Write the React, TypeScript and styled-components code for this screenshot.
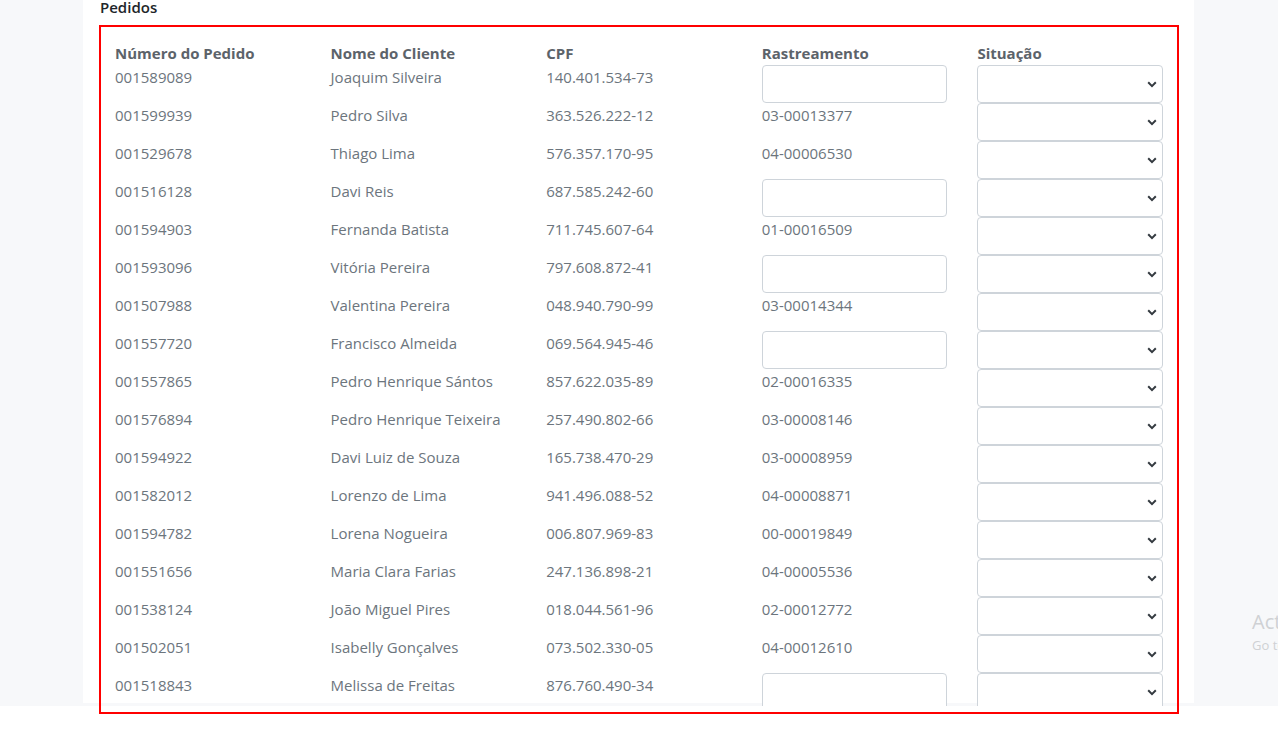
import React from 'react';
import styled, { createGlobalStyle } from 'styled-components';

const GlobalStyle = createGlobalStyle`
  html, body {
    margin: 0;
    padding: 0;
    background: #ffffff;
  }
  * {
    box-sizing: border-box;
  }
`;

const Screen = styled.div`
  position: relative;
  width: 1278px;
  height: 739px;
  overflow: hidden;
  background: #ffffff;
  font-family: 'Open Sans', 'Noto Sans', 'Liberation Sans', sans-serif;
`;

const Viewport = styled.div`
  height: 706px;
  overflow: hidden;
  background: #f7f8fa;
`;

const Card = styled.main`
  width: 1111px;
  height: 100%;
  margin: 0 84px 0 83px;
  padding: 0 15px 0 16px;
  background: #ffffff;
`;

const Title = styled.h5`
  margin: -3px 0 8px 1px;
  height: 20px;
  font-size: 15px;
  line-height: 20px;
  font-weight: 600;
  color: #212529;
`;

const OrdersTable = styled.section`
  padding: 16px 16px 0 16px;
`;

const Row = styled.div<{ $header?: boolean }>`
  display: grid;
  grid-template-columns: repeat(5, 1fr);
  column-gap: 30px;
  height: ${(p) => (p.$header ? '24px' : '38px')};
  align-items: start;
`;

const Cell = styled.div<{ $header?: boolean }>`
  font-size: 15px;
  line-height: 24px;
  font-weight: ${(p) => (p.$header ? 700 : 400)};
  color: ${(p) => (p.$header ? '#5c636a' : '#6c757d')};
  white-space: nowrap;
`;

const TrackingInput = styled.input`
  display: block;
  width: 100%;
  height: 38px;
  padding: 6px 12px;
  border: 1px solid #ced4da;
  border-radius: 4px;
  background: #ffffff;
  font: inherit;
  color: #495057;
  outline: none;
`;

const SelectWrap = styled.div`
  position: relative;
  width: 100%;
  height: 38px;
`;

const StatusSelect = styled.select`
  display: block;
  width: 100%;
  height: 38px;
  padding: 6px 12px;
  border: 1px solid #ced4da;
  border-radius: 4px;
  background: #ffffff;
  appearance: none;
  -webkit-appearance: none;
  font: inherit;
  color: #495057;
`;

const Chevron = styled.svg`
  position: absolute;
  right: 6px;
  top: 50%;
  margin-top: -3px;
  pointer-events: none;
`;

const Highlight = styled.div`
  position: absolute;
  top: 25px;
  left: 99px;
  width: 1080px;
  height: 689px;
  border: 2px solid #ff0000;
  pointer-events: none;
`;

const Watermark = styled.div`
  position: absolute;
  top: 608px;
  left: 1252px;
  white-space: nowrap;
  color: #cfd1d4;
  font-family: 'Open Sans', 'Noto Sans', sans-serif;
  pointer-events: none;

  .big {
    font-size: 20px;
    line-height: 28px;
  }
  .small {
    font-size: 13px;
    line-height: 18px;
  }
`;

type Order = {
  numero: string;
  cliente: string;
  cpf: string;
  rastreio?: string;
};

const orders: Order[] = [
  { numero: '001589089', cliente: 'Joaquim Silveira', cpf: '140.401.534-73' },
  { numero: '001599939', cliente: 'Pedro Silva', cpf: '363.526.222-12', rastreio: '03-00013377' },
  { numero: '001529678', cliente: 'Thiago Lima', cpf: '576.357.170-95', rastreio: '04-00006530' },
  { numero: '001516128', cliente: 'Davi Reis', cpf: '687.585.242-60' },
  { numero: '001594903', cliente: 'Fernanda Batista', cpf: '711.745.607-64', rastreio: '01-00016509' },
  { numero: '001593096', cliente: 'Vitória Pereira', cpf: '797.608.872-41' },
  { numero: '001507988', cliente: 'Valentina Pereira', cpf: '048.940.790-99', rastreio: '03-00014344' },
  { numero: '001557720', cliente: 'Francisco Almeida', cpf: '069.564.945-46' },
  { numero: '001557865', cliente: 'Pedro Henrique Sántos', cpf: '857.622.035-89', rastreio: '02-00016335' },
  { numero: '001576894', cliente: 'Pedro Henrique Teixeira', cpf: '257.490.802-66', rastreio: '03-00008146' },
  { numero: '001594922', cliente: 'Davi Luiz de Souza', cpf: '165.738.470-29', rastreio: '03-00008959' },
  { numero: '001582012', cliente: 'Lorenzo de Lima', cpf: '941.496.088-52', rastreio: '04-00008871' },
  { numero: '001594782', cliente: 'Lorena Nogueira', cpf: '006.807.969-83', rastreio: '00-00019849' },
  { numero: '001551656', cliente: 'Maria Clara Farias', cpf: '247.136.898-21', rastreio: '04-00005536' },
  { numero: '001538124', cliente: 'João Miguel Pires', cpf: '018.044.561-96', rastreio: '02-00012772' },
  { numero: '001502051', cliente: 'Isabelly Gonçalves', cpf: '073.502.330-05', rastreio: '04-00012610' },
  { numero: '001518843', cliente: 'Melissa de Freitas', cpf: '876.760.490-34' },
];

const StatusField: React.FC = () => (
  <SelectWrap>
    <StatusSelect defaultValue=''>
      <option value=''></option>
      <option value='enviado'>Enviado</option>
      <option value='entregue'>Entregue</option>
    </StatusSelect>
    <Chevron width='10' height='7' viewBox='0 0 10 7'>
      <path d='M1.2 1.3 5 5.1 8.8 1.3' fill='none' stroke='#343a40' strokeWidth='2' />
    </Chevron>
  </SelectWrap>
);

const App: React.FC = () => {
  return (
    <Screen>
      <GlobalStyle />
      <Viewport>
        <Card>
          <Title>Pedidos</Title>
          <OrdersTable>
            <Row $header>
              <Cell $header>Número do Pedido</Cell>
              <Cell $header>Nome do Cliente</Cell>
              <Cell $header>CPF</Cell>
              <Cell $header>Rastreamento</Cell>
              <Cell $header>Situação</Cell>
            </Row>
            {orders.map((o) => (
              <Row key={o.numero}>
                <Cell>{o.numero}</Cell>
                <Cell>{o.cliente}</Cell>
                <Cell>{o.cpf}</Cell>
                {o.rastreio ? <Cell>{o.rastreio}</Cell> : <TrackingInput type='text' />}
                <StatusField />
              </Row>
            ))}
          </OrdersTable>
        </Card>
      </Viewport>
      <Highlight />
      <Watermark>
        <div className='big'>Activate Windows</div>
        <div className='small'>Go to Settings to activate Windows.</div>
      </Watermark>
    </Screen>
  );
};

export default App;
